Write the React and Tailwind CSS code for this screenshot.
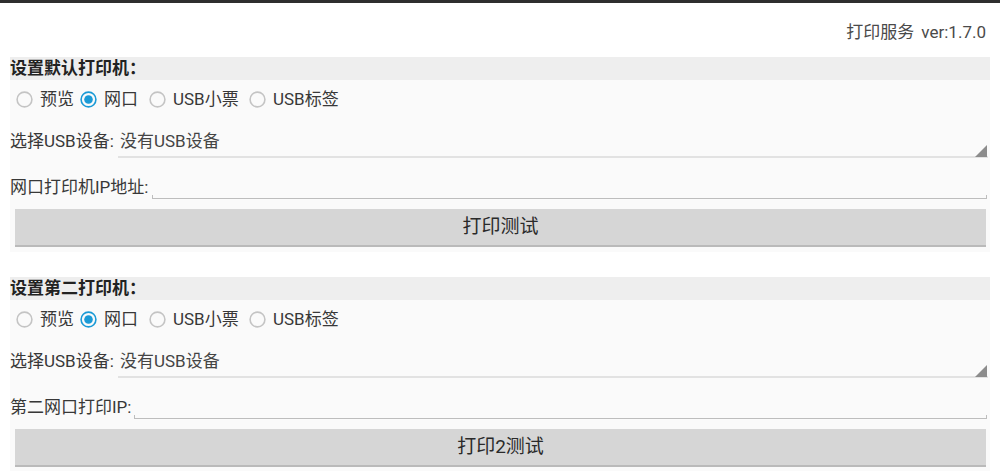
function Radio({ checked }) {
	return (
		<svg width="17" height="17" viewBox="0 0 17 17" className="shrink-0">
			<circle cx="8.5" cy="8.5" r="7.4" fill="none" stroke={checked ? "#1a9ad6" : "#c4c4c4"} strokeWidth="1.6" />
			{checked && <circle cx="8.5" cy="8.5" r="4.3" fill="#1a9ad6" />}
		</svg>
	);
}

function RadioRow() {
	const items = [
		{ label: "预览", w: "w-[40px]", checked: false },
		{ label: "网口", w: "w-[45px]", checked: true },
		{ label: "USB小票", w: "w-[76px]", checked: false },
		{ label: "USB标签", w: "w-[70px]", checked: false },
	];
	return (
		<div className="flex items-center h-[38px] pl-[6px]">
			{items.map((it) => (
				<div key={it.label} className="flex items-center">
					<Radio checked={it.checked} />
					<span className={"ml-[7px] leading-[20px] " + it.w}>{it.label}</span>
				</div>
			))}
		</div>
	);
}

function Section({ title, ipLabel, ipGap, button, last }) {
	return (
		<div className={"mx-[10px] " + (last ? "" : "mb-[25px]")}>
			<div className="h-[23px] bg-[#eeeeee] font-bold leading-[23px] text-[#222]">{title}</div>
			<div className="bg-[#fafafa] pb-[5px]">
				<RadioRow />
				<div className="flex h-[40px]">
					<span className="w-[108px] shrink-0 pt-[13px] leading-[20px]">选择USB设备: </span>
					<div className="relative flex-1 mr-[2px] border-b-2 border-[#e2e2e2] pt-[13px] pl-[2px] leading-[20px] text-[#444]">
						没有USB设备
						<svg width="12" height="12" viewBox="0 0 12 12" className="absolute right-[1px] bottom-[-1px]">
							<polygon points="12,0 12,12 0,12" fill="#8c8c8c" />
						</svg>
					</div>
				</div>
				<div className="flex items-start h-[44px]">
					<span className="mt-[19px] leading-[20px] shrink-0">{ipLabel}</span>
					<div className={"flex-1 mt-[37px] mr-[3px] h-[4px] border-x border-b border-[#bdbdbd] " + ipGap}></div>
				</div>
				<div className="mt-[7px] ml-[5px] mr-[4px] h-[38px] bg-[#d6d6d6] border-b-2 border-[#bababa] flex items-center justify-center text-[19px] text-[#2a2a2a]">
					{button}
				</div>
			</div>
		</div>
	);
}

export default function App() {
	return (
		<div className="w-[1000px] h-[471px] overflow-hidden bg-white text-[17px] text-[#383838] font-[Roboto,'Noto_Sans_CJK_SC',sans-serif]">
			<div className="h-[3px] bg-[#2e2e2e]"></div>
			<div className="h-[54px] flex justify-end pt-[19px] pr-[14px] leading-[20px] text-[#4a4a4a]">
				<span>打印服务</span>
				<span className="ml-[7px]">ver:1.7.0</span>
			</div>
			<Section title="设置默认打印机：" ipLabel="网口打印机IP地址:" ipGap="ml-[4px]" button="打印测试" />
			<Section title="设置第二打印机：" ipLabel="第二网口打印IP:" ipGap="ml-[3px]" button="打印2测试" last />
		</div>
	);
}
